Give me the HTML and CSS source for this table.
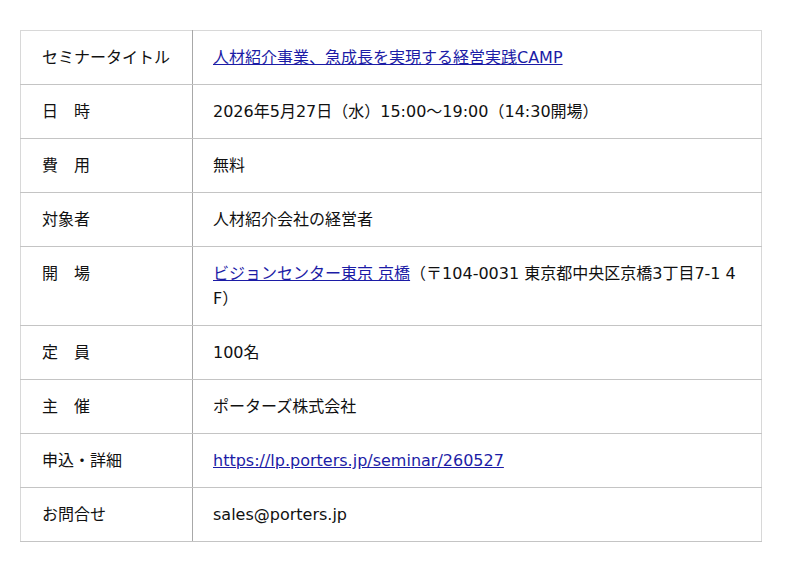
FILE: index.html
```html
<!DOCTYPE html>
<html lang="ja">
<head>
<meta charset="utf-8">
<link rel="stylesheet" href="styles.css">
</head>
<body>
<table class="info">
  <tr><th>セミナータイトル</th><td><a href="#">人材紹介事業、急成長を実現する経営実践CAMP</a></td></tr>
  <tr><th>日　時</th><td>2026年5月27日（水）15:00〜19:00（14:30開場）</td></tr>
  <tr><th>費　用</th><td>無料</td></tr>
  <tr><th>対象者</th><td>人材紹介会社の経営者</td></tr>
  <tr><th>開　場</th><td><a href="#">ビジョンセンター東京 京橋</a>（〒104-0031 東京都中央区京橋3丁目7-1 4F）</td></tr>
  <tr><th>定　員</th><td>100名</td></tr>
  <tr><th>主　催</th><td>ポーターズ株式会社</td></tr>
  <tr><th>申込・詳細</th><td><a href="#">https://lp.porters.jp/seminar/260527</a></td></tr>
  <tr><th>お問合せ</th><td>sales@porters.jp</td></tr>
</table>
</body>
</html>
```

FILE: styles.css
```css
html, body {
  margin: 0;
  padding: 0;
  background: #fff;
}
body {
  padding: 30px 20px;
  font-family: "DejaVu Sans", "Noto Sans CJK JP", sans-serif;
  font-size: 16px;
  color: #111;
}
.info {
  width: 742px;
  border-collapse: collapse;
  border: 1px solid #d8d8d8;
}
.info th, .info td {
  text-align: left;
  vertical-align: top;
  font-weight: normal;
  line-height: 25px;
  padding: 14px 20px;
  border-bottom: 1px solid #c4c4c4;
}
.info td {
  word-break: break-all;
}
.info th {
  width: 130px;
  padding-left: 21px;
  border-right: 1px solid #a8a8a8;
}
.info a {
  color: #1c1ca6;
}
```
